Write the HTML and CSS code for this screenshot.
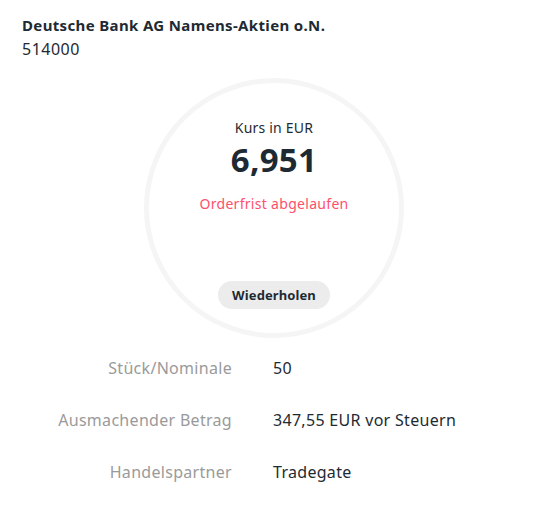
FILE: index.html
```html
<!DOCTYPE html>
<html lang="de">
<head>
<meta charset="utf-8">
<link rel="stylesheet" href="styles.css">
</head>
<body>
<div class="page">
  <header class="head">
    <div class="title">Deutsche Bank AG Namens-Aktien o.N.</div>
    <div class="wkn">514000</div>
  </header>
  <section class="dial-wrap">
    <div class="dial">
      <div class="kurs-label">Kurs in EUR</div>
      <div class="kurs">6,951</div>
      <div class="status">Orderfrist abgelaufen</div>
      <button class="retry">Wiederholen</button>
    </div>
  </section>
  <dl class="details">
    <div class="row"><dt>Stück/Nominale</dt><dd>50</dd></div>
    <div class="row"><dt>Ausmachender Betrag</dt><dd>347,55 EUR vor Steuern</dd></div>
    <div class="row"><dt>Handelspartner</dt><dd>Tradegate</dd></div>
  </dl>
</div>
</body>
</html>
```
FILE: styles.css
```css
* { box-sizing: border-box; }
html, body { margin: 0; padding: 0; background: #fff; }
body {
  font-family: "Noto Sans", "Liberation Sans", sans-serif;
  color: #1e2a33;
  width: 547px;
  height: 507px;
  overflow: hidden;
}
.page { padding: 15px 22px 0 22px; }
.head { display: flex; flex-direction: column; gap: 3px; }
.title { font-size: 15px; font-weight: 700; line-height: 21px; letter-spacing: 0.35px; }
.wkn { font-size: 16px; line-height: 21px; letter-spacing: 0.5px; }
.dial-wrap { display: flex; justify-content: flex-start; padding-left: 122px; margin-top: 18px; }
.dial {
  width: 260px;
  height: 260px;
  border-radius: 50%;
  border: 5px solid #f5f5f5;
  display: flex;
  flex-direction: column;
  align-items: center;
  padding-top: 35px;
}
.kurs-label { font-size: 14px; line-height: 20px; letter-spacing: 0.2px; }
.kurs { font-size: 33px; font-weight: 700; line-height: 36px; margin-top: 4px; letter-spacing: 0.3px; }
.status { font-size: 14px; color: #ff4f6b; line-height: 18px; margin-top: 17px; letter-spacing: 0.3px; }
.retry {
  margin-top: 68px;
  height: 28px;
  padding: 0 14px;
  border: none;
  border-radius: 14px;
  background: #ececec;
  font-family: inherit;
  font-size: 13px;
  font-weight: 700;
  color: #1e2a33;
  letter-spacing: 0.1px;
}
.details { margin: 19px 0 0 0; display: flex; flex-direction: column; gap: 30px; }
.row { display: grid; grid-template-columns: 210px 1fr; column-gap: 41px; font-size: 16px; line-height: 22px; letter-spacing: 0.3px; }
.row dt { text-align: right; color: #9a9a9a; }
.row dd { margin: 0; color: #1e2a33; }
```
